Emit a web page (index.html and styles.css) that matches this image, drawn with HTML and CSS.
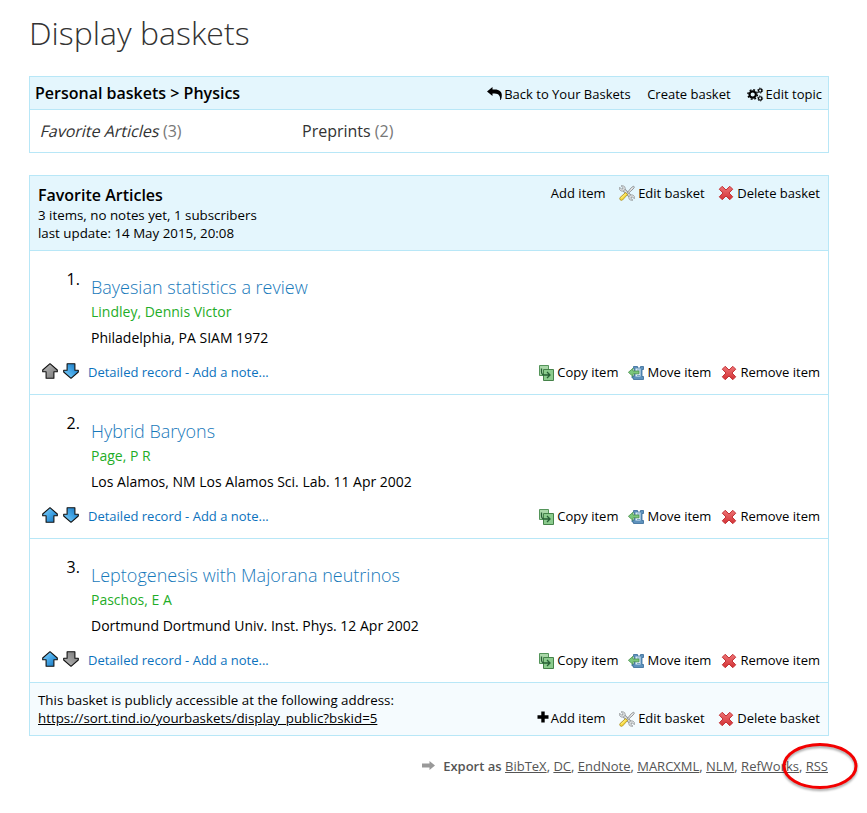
FILE: index.html
```html
<!DOCTYPE html>
<html lang="en">
<head>
<meta charset="utf-8">
<title>Display baskets</title>
<link rel="stylesheet" href="styles.css">
</head>
<body>
<svg class="defs" width="0" height="0" aria-hidden="true">
  <defs>
    <linearGradient id="blue" x1="0" y1="0" x2="1" y2="1"><stop offset="0" stop-color="#8fd6fa"/><stop offset=".5" stop-color="#43a5e6"/><stop offset="1" stop-color="#1470b8"/></linearGradient>
    <linearGradient id="grey" x1="0" y1="0" x2="1" y2="1"><stop offset="0" stop-color="#bbb"/><stop offset="1" stop-color="#777"/></linearGradient>
    <linearGradient id="red" x1="0" y1="0" x2="0" y2="1"><stop offset="0" stop-color="#ee7476"/><stop offset="1" stop-color="#d33235"/></linearGradient>
    <symbol id="arrow" viewBox="0 0 16 16"><path d="M8 .7 15.300 7v1.800h-3.400v6.500H4.100V8.800H.7V7z" stroke="#111" stroke-width="1.100" stroke-linejoin="round"/></symbol>
    <symbol id="cross" viewBox="0 0 16 16"><path d="M4.200 1.300 8 5l3.800-3.700 2.900 2.900L11 8l3.700 3.800-2.900 2.900L8 11l-3.800 3.700-2.900-2.900L5 8 1.300 4.200z" fill="url(#red)" stroke="#c23034" stroke-linejoin="round"/></symbol>
    <symbol id="copy" viewBox="0 0 16 16"><path d="M1.500.5h9v10h-9z" fill="#a9d7a8" stroke="#55955b"/><path d="M5.500 4.500h10v11h-10z" fill="#8bcb8d" stroke="#458249"/><path d="M3.500 3.500v3q0 3.500 3 3.500h5.500M9 7l3 3-3 3" fill="none" stroke="#275f35" stroke-width="1.300"/></symbol>
    <symbol id="move" viewBox="0 0 16 16"><path d="M5.500 1.500h4v1.500h3V1.500h3v3H14v7h1.500v3H5.500v-1.500H4v-2h2.500V3.500h-1z" fill="#5e92bd" stroke="#356a98" stroke-width=".8"/><path d="M7.500 3.500h5v8h-5z" fill="#dcebf5"/><path d="M9 5h3M9 10.500h3" stroke="#78a5c8"/><path d="M.4 7.300 5 3.300V6h6v2.800H5v2.700z" fill="#7bc77c" stroke="#48914c" stroke-width=".8"/></symbol>
    <symbol id="tools" viewBox="0 0 16 16"><path d="M3.500 3.500l9 9" stroke="#888d91" stroke-width="3.200"/><path d="M3.500 3.500l9 9" stroke="#e2e5e6" stroke-width="1.700"/><path d="M2 .8 4 2.500 3.800 4 2.300 4 .7 2.200Q-.2 4.900 2 6q2 .6 3.600-.8Q6.800 3.500 5.800 1.800 4.300.2 2 .8ZM14 15.200l-2-1.700.2-1.500 1.500 0 1.600 1.800q.9-2.700-1.300-3.800-2-.6-3.600.8-1.200 1.700-.2 3.400 1.500 1.600 3.800 1Z" fill="#e0e3e4" stroke="#8b8f92" stroke-width=".7"/><path d="M7.500 8.500l5-6 2.100-1.300.8.900-1.400 2L8.500 9z" fill="#eee" stroke="#777b7e" stroke-width=".8"/><path d="M6.600 7.500 8.600 9.500 3.500 15q-1.300.8-2.300-.2-1-1-.1-2.300z" fill="#f6d93a" stroke="#a98b20" stroke-width=".8"/><path d="m6.600 8.800-4.500 4.500" stroke="#fff19a"/></symbol>
    <symbol id="reply" viewBox="0 0 15 13"><path d="M0 4.500 5.500 0v2.600h2.200c4.800 0 7.300 2.300 7.100 6.200 0 1.500-.4 2.800-1.100 4.200h-.5c.2-3.500-1.200-6.400-5.500-6.400H5.500V9z"/></symbol>
    <symbol id="cogs" viewBox="0 0 18 16"><g fill="none" stroke="#000"><circle cx="6" cy="8" r="3.400" stroke-width="2.300"/><circle cx="6" cy="8" r="5.100" stroke-width="1.500" stroke-dasharray="2 2.005"/><circle cx="14" cy="3.800" r="1.800" stroke-width="1.300"/><circle cx="14" cy="3.800" r="2.700" stroke-width="1" stroke-dasharray="1.200 1.627"/><circle cx="14" cy="12.200" r="1.800" stroke-width="1.300"/><circle cx="14" cy="12.200" r="2.700" stroke-width="1" stroke-dasharray="1.200 1.627"/></g></symbol>
    <symbol id="plus" viewBox="0 0 12 12"><path d="M4.300.5h3.400v3.800h3.800v3.400H7.700v3.800H4.300V7.700H.5V4.300h3.800z"/></symbol>
  </defs>
</svg>
<main class="page">
  <h1 class="title">Display baskets</h1>

  <section class="panel topic">
    <header class="topic-head">
      <h2 class="topic-name">Personal baskets &gt; Physics</h2>
      <nav class="topic-actions">
        <a class="action"><svg class="reply"><use href="#reply"/></svg>Back to Your Baskets</a>
        <a class="action">Create basket</a>
        <a class="action"><svg class="cogs"><use href="#cogs"/></svg>Edit topic</a>
      </nav>
    </header>
    <div class="tabs">
      <div><em class="current">Favorite Articles</em><span class="count">(3)</span></div>
      <div>Preprints <span class="count">(2)</span></div>
    </div>
  </section>

  <section class="panel">
    <header class="basket-head">
      <div>
        <h3 class="basket-name">Favorite Articles</h3>
        <p class="meta">3 items, no notes yet, 1 subscribers<br>last update: 14 May 2015, 20:08</p>
      </div>
      <nav class="basket-actions">
        <a class="action">Add item</a>
        <a class="action"><svg class="icon"><use href="#tools"/></svg>Edit basket</a>
        <a class="action"><svg class="icon"><use href="#cross"/></svg>Delete basket</a>
      </nav>
    </header>

    <article class="item">
      <div class="record">
        <span class="number">1.</span>
        <div>
          <h4 class="name">Bayesian statistics a review</h4>
          <p class="author">Lindley, Dennis Victor</p>
          <p class="source">Philadelphia, PA SIAM 1972</p>
        </div>
      </div>
      <footer class="item-foot">
        <svg class="sort off"><use href="#arrow"/></svg>
        <svg class="sort down"><use href="#arrow"/></svg>
        <span class="links"><a>Detailed record</a> - <a>Add a note...</a></span>
        <nav class="item-actions">
          <a class="action"><svg class="icon"><use href="#copy"/></svg>Copy item</a>
          <a class="action"><svg class="icon"><use href="#move"/></svg>Move item</a>
          <a class="action"><svg class="icon"><use href="#cross"/></svg>Remove item</a>
        </nav>
      </footer>
    </article>

    <article class="item">
      <div class="record">
        <span class="number">2.</span>
        <div>
          <h4 class="name">Hybrid Baryons</h4>
          <p class="author">Page, P R</p>
          <p class="source">Los Alamos, NM Los Alamos Sci. Lab. 11 Apr 2002</p>
        </div>
      </div>
      <footer class="item-foot">
        <svg class="sort"><use href="#arrow"/></svg>
        <svg class="sort down"><use href="#arrow"/></svg>
        <span class="links"><a>Detailed record</a> - <a>Add a note...</a></span>
        <nav class="item-actions">
          <a class="action"><svg class="icon"><use href="#copy"/></svg>Copy item</a>
          <a class="action"><svg class="icon"><use href="#move"/></svg>Move item</a>
          <a class="action"><svg class="icon"><use href="#cross"/></svg>Remove item</a>
        </nav>
      </footer>
    </article>

    <article class="item">
      <div class="record">
        <span class="number">3.</span>
        <div>
          <h4 class="name">Leptogenesis with Majorana neutrinos</h4>
          <p class="author">Paschos, E A</p>
          <p class="source">Dortmund Dortmund Univ. Inst. Phys. 12 Apr 2002</p>
        </div>
      </div>
      <footer class="item-foot">
        <svg class="sort"><use href="#arrow"/></svg>
        <svg class="sort down off"><use href="#arrow"/></svg>
        <span class="links"><a>Detailed record</a> - <a>Add a note...</a></span>
        <nav class="item-actions">
          <a class="action"><svg class="icon"><use href="#copy"/></svg>Copy item</a>
          <a class="action"><svg class="icon"><use href="#move"/></svg>Move item</a>
          <a class="action"><svg class="icon"><use href="#cross"/></svg>Remove item</a>
        </nav>
      </footer>
    </article>

    <footer class="basket-foot">
      <p class="meta">This basket is publicly accessible at the following address:<br><a class="url">https://sort.tind.io/yourbaskets/display_public?bskid=5</a></p>
      <nav class="basket-actions">
        <a class="action"><svg class="plus"><use href="#plus"/></svg>Add item</a>
        <a class="action"><svg class="icon"><use href="#tools"/></svg>Edit basket</a>
        <a class="action"><svg class="icon"><use href="#cross"/></svg>Delete basket</a>
      </nav>
    </footer>
  </section>

  <div class="export">
    <svg class="export-arrow" viewBox="0 0 13 9"><path d="M0 2.500h7.500V0L13 4.500 7.500 9V6.500H0z"/></svg>
    <p class="formats"><b>Export as</b> <a>BibTeX</a>, <a>DC</a>, <a>EndNote</a>, <a>MARCXML</a>, <a>NLM</a>, <a>RefWorks</a>, <a>RSS</a></p>
    <svg class="marker" viewBox="0 0 84 58"><ellipse cx="39" cy="25" rx="36" ry="21.500"/></svg>
  </div>
</main>
</body>
</html>
```
FILE: styles.css
```css
* { box-sizing: border-box; }

body {
  margin: 0;
  background: #fff;
  color: #000;
  font: 13px/18px "Open Sans", sans-serif;
}

h1, h2, h3, h4, p { margin: 0; }
svg { display: block; flex: none; }
.defs { position: absolute; }

.page { width: 800px; min-height: 813px; margin-left: 29px; padding-top: 9px; }

.title {
  height: 67px;
  color: #333;
  font-size: 32px;
  font-weight: 300;
  line-height: 48px;
}

.panel { border: 1px solid #b8e7f7; }
.topic { height: 77px; margin-bottom: 22px; }

.topic-head {
  display: flex;
  align-items: center;
  justify-content: space-between;
  height: 33px;
  padding: 0 6px 0 5px;
  border-bottom: 1px solid #b8e7f7;
  background: #e4f6fd;
}

.topic-name { font-size: 16px; font-weight: 600; }
.topic-actions { display: flex; gap: 16.500px; padding-top: 2px; }
.action { display: flex; align-items: center; white-space: nowrap; }
.reply { width: 15px; height: 13px; margin: -2px 2px 0 0; }
.cogs { width: 17px; height: 15px; margin-right: 1.500px; }
.icon { width: 16px; height: 16px; margin-right: 3px; }
.plus { width: 12px; height: 12px; margin: -2px 2px 0 0; }

.tabs {
  display: grid;
  grid-template-columns: 261px 1fr;
  padding: 10px 11px;
  color: #333;
  font-size: 16px;
  line-height: 22px;
}
.current { display: inline-block; margin-right: 3px; font-style: normal; transform: skewX(-14deg); }
.count { color: #777; }

.basket-head {
  display: flex;
  align-items: flex-start;
  justify-content: space-between;
  height: 75px;
  padding: 8px 8px 0;
  border-bottom: 1px solid #b8e7f7;
  background: #e4f6fd;
}
.basket-name { font-size: 16px; font-weight: 600; line-height: 22px; }
.meta { font-size: 13.330px; }
.basket-actions { display: flex; gap: 13.500px; }

.item { height: 144px; padding: 17px 8px 0 12px; border-bottom: 1px solid #b8e7f7; }
.record { display: flex; height: 95px; }
.number { width: 49px; padding-left: 24.500px; font-size: 16px; line-height: 22px; }
.name { padding-top: 6px; color: #1779ba; font-size: 18px; font-weight: 300; line-height: 26px; }
.author { padding-top: 1px; color: #1fad28; font-size: 14px; line-height: 22px; }
.source { padding-top: 6px; font-size: 14px; line-height: 18px; }
.item-foot { display: flex; align-items: center; height: 18px; }
.sort { width: 16px; height: 16px; margin: -2px 5px 0 0; fill: url(#blue); }
.off { fill: url(#grey); }
.down { transform: scaleY(-1); }
.links { margin-left: 4px; color: #0c72bd; }
.item-actions { display: flex; gap: 10px; margin-left: auto; }
.item-actions .icon { transform: translateY(1px); }

.basket-foot {
  display: flex;
  align-items: flex-end;
  justify-content: space-between;
  height: 52px;
  padding: 0 8px 8px;
  background: #f5fbfe;
}
.basket-foot .icon { transform: translateY(1px); }
.url, .formats a { text-decoration: underline; }

.export {
  position: relative;
  display: flex;
  align-items: center;
  justify-content: flex-end;
  height: 18px;
  margin-top: 21px;
  padding-right: 1px;
  color: #555;
}
.export-arrow { width: 13px; height: 9px; margin: -2px 8px 0 0; fill: #999; }
.formats b { font-weight: 600; }
.marker {
  position: absolute;
  top: -16px;
  right: -36px;
  width: 84px;
  height: 58px;
  fill: none;
  stroke: #f30000;
  stroke-width: 3px;
  filter: drop-shadow(0 2px 1px #0005);
}
```
